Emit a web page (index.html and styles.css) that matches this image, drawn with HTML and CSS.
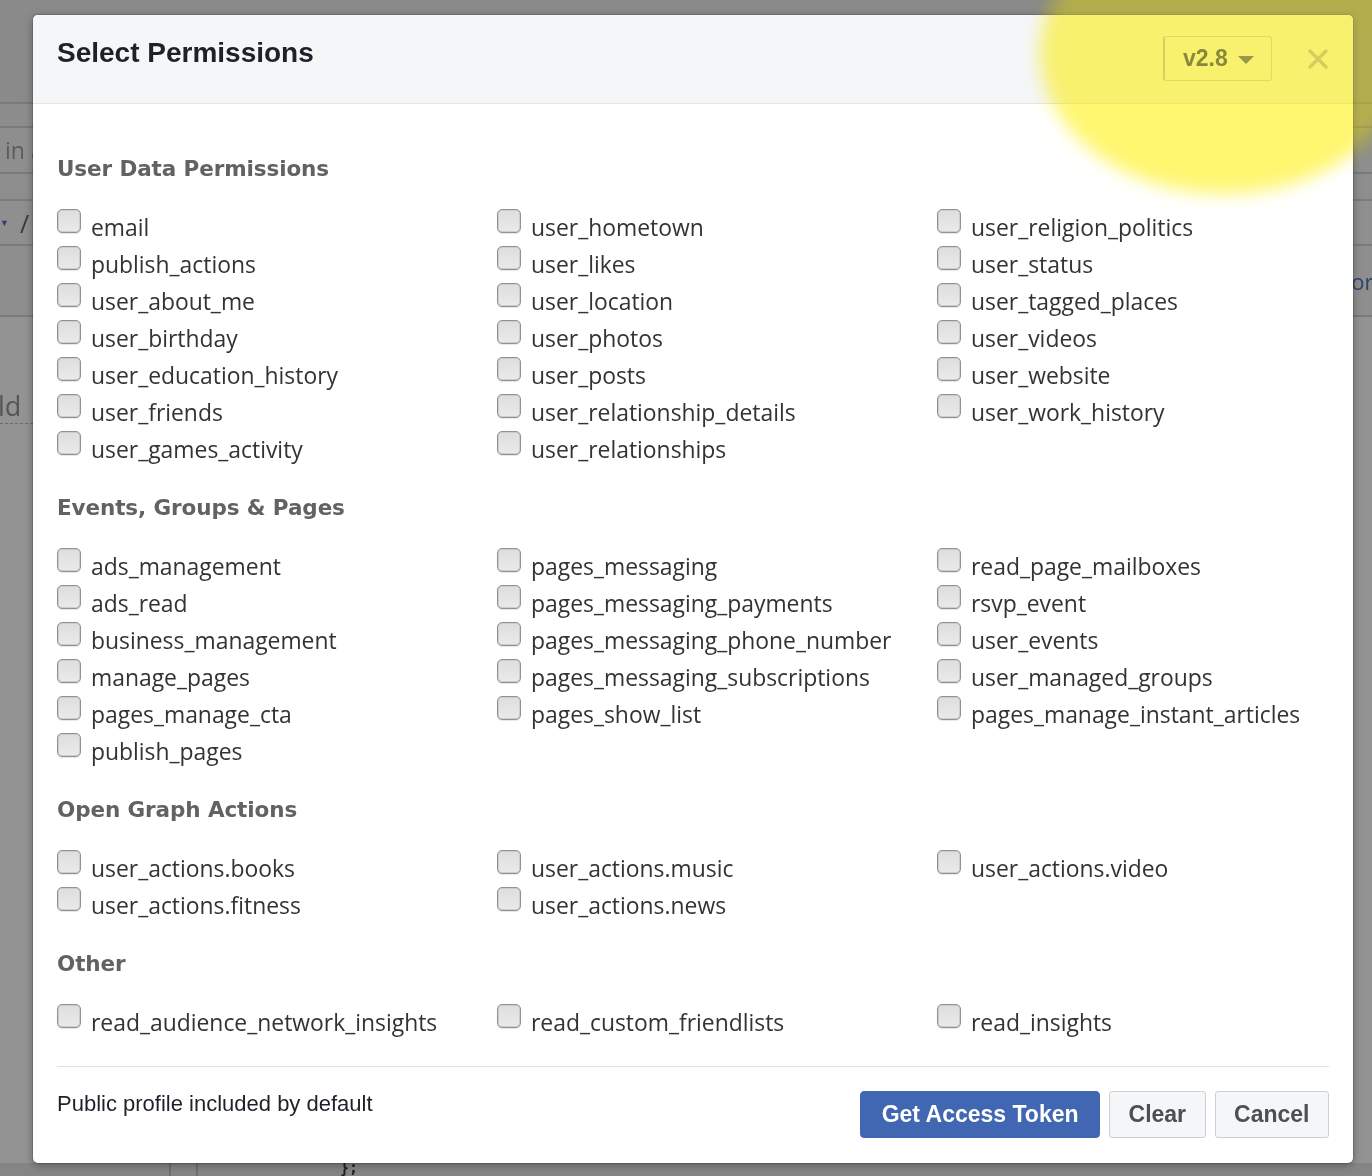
FILE: index.html
```html
<!DOCTYPE html>
<html>
<head>
<meta charset="utf-8">
<link rel="stylesheet" href="styles.css">
</head>
<body>
<div class="page">
  <div class="bg-row r1"></div>
  <div class="bg-row r2"></div>
  <div class="bg-row r3"><span class="bg-text">in a</span></div>
  <div class="bg-row r4"></div>
  <div class="bg-row r5"><span class="bg-tri">▼</span><span class="bg-text slash">/</span><span class="bg-text bg-r">r</span></div>
  <div class="bg-row r6"><span class="bg-more">more</span></div>
  <div class="bg-rest">
    <div class="bg-ld"><span class="bg-text ld">ld</span></div>
  </div>
  <div class="bg-bottom">
    <div class="bg-vcol"></div>
    <span class="bg-code">};</span>
  </div>
</div>

<div class="modal">
  <div class="modal-header">
    <div class="title">Select Permissions</div>
    <div class="header-right">
      <div class="version">v2.8<span class="caret"></span></div>
      <div class="close">
        <svg width="20" height="20" viewBox="0 0 20 20"><path d="M2 2 L18 18 M18 2 L2 18" stroke="#bcc0c4" stroke-width="3.4" stroke-linecap="round" fill="none"/></svg>
      </div>
    </div>
  </div>

  <div class="modal-body">
    <section class="group">
      <h2 class="group-title">User Data Permissions</h2>
      <div class="cols">
        <div class="col">
          <label class="item"><input type="checkbox" class="cb"><span>email</span></label>
          <label class="item"><input type="checkbox" class="cb"><span>publish_actions</span></label>
          <label class="item"><input type="checkbox" class="cb"><span>user_about_me</span></label>
          <label class="item"><input type="checkbox" class="cb"><span>user_birthday</span></label>
          <label class="item"><input type="checkbox" class="cb"><span>user_education_history</span></label>
          <label class="item"><input type="checkbox" class="cb"><span>user_friends</span></label>
          <label class="item"><input type="checkbox" class="cb"><span>user_games_activity</span></label>
        </div>
        <div class="col">
          <label class="item"><input type="checkbox" class="cb"><span>user_hometown</span></label>
          <label class="item"><input type="checkbox" class="cb"><span>user_likes</span></label>
          <label class="item"><input type="checkbox" class="cb"><span>user_location</span></label>
          <label class="item"><input type="checkbox" class="cb"><span>user_photos</span></label>
          <label class="item"><input type="checkbox" class="cb"><span>user_posts</span></label>
          <label class="item"><input type="checkbox" class="cb"><span>user_relationship_details</span></label>
          <label class="item"><input type="checkbox" class="cb"><span>user_relationships</span></label>
        </div>
        <div class="col">
          <label class="item"><input type="checkbox" class="cb"><span>user_religion_politics</span></label>
          <label class="item"><input type="checkbox" class="cb"><span>user_status</span></label>
          <label class="item"><input type="checkbox" class="cb"><span>user_tagged_places</span></label>
          <label class="item"><input type="checkbox" class="cb"><span>user_videos</span></label>
          <label class="item"><input type="checkbox" class="cb"><span>user_website</span></label>
          <label class="item"><input type="checkbox" class="cb"><span>user_work_history</span></label>
        </div>
      </div>
    </section>

    <section class="group">
      <h2 class="group-title">Events, Groups &amp; Pages</h2>
      <div class="cols">
        <div class="col">
          <label class="item"><input type="checkbox" class="cb"><span>ads_management</span></label>
          <label class="item"><input type="checkbox" class="cb"><span>ads_read</span></label>
          <label class="item"><input type="checkbox" class="cb"><span>business_management</span></label>
          <label class="item"><input type="checkbox" class="cb"><span>manage_pages</span></label>
          <label class="item"><input type="checkbox" class="cb"><span>pages_manage_cta</span></label>
          <label class="item"><input type="checkbox" class="cb"><span>publish_pages</span></label>
        </div>
        <div class="col">
          <label class="item"><input type="checkbox" class="cb"><span>pages_messaging</span></label>
          <label class="item"><input type="checkbox" class="cb"><span>pages_messaging_payments</span></label>
          <label class="item"><input type="checkbox" class="cb"><span>pages_messaging_phone_number</span></label>
          <label class="item"><input type="checkbox" class="cb"><span>pages_messaging_subscriptions</span></label>
          <label class="item"><input type="checkbox" class="cb"><span>pages_show_list</span></label>
        </div>
        <div class="col">
          <label class="item"><input type="checkbox" class="cb"><span>read_page_mailboxes</span></label>
          <label class="item"><input type="checkbox" class="cb"><span>rsvp_event</span></label>
          <label class="item"><input type="checkbox" class="cb"><span>user_events</span></label>
          <label class="item"><input type="checkbox" class="cb"><span>user_managed_groups</span></label>
          <label class="item"><input type="checkbox" class="cb"><span>pages_manage_instant_articles</span></label>
        </div>
      </div>
    </section>

    <section class="group">
      <h2 class="group-title">Open Graph Actions</h2>
      <div class="cols">
        <div class="col">
          <label class="item"><input type="checkbox" class="cb"><span>user_actions.books</span></label>
          <label class="item"><input type="checkbox" class="cb"><span>user_actions.fitness</span></label>
        </div>
        <div class="col">
          <label class="item"><input type="checkbox" class="cb"><span>user_actions.music</span></label>
          <label class="item"><input type="checkbox" class="cb"><span>user_actions.news</span></label>
        </div>
        <div class="col">
          <label class="item"><input type="checkbox" class="cb"><span>user_actions.video</span></label>
        </div>
      </div>
    </section>

    <section class="group">
      <h2 class="group-title">Other</h2>
      <div class="cols">
        <div class="col">
          <label class="item"><input type="checkbox" class="cb"><span>read_audience_network_insights</span></label>
        </div>
        <div class="col">
          <label class="item"><input type="checkbox" class="cb"><span>read_custom_friendlists</span></label>
        </div>
        <div class="col">
          <label class="item"><input type="checkbox" class="cb"><span>read_insights</span></label>
        </div>
      </div>
    </section>

    <div class="divider"></div>
  </div>

  <div class="modal-footer">
    <div class="note">Public profile included by default</div>
    <div class="buttons">
      <button class="btn primary">Get Access Token</button>
      <button class="btn">Clear</button>
      <button class="btn">Cancel</button>
    </div>
  </div>
</div>

<div class="highlight hl-multiply"></div>
<div class="highlight hl-soft"></div>
</body>
</html>
```

FILE: styles.css
```css
html, body {
  margin: 0;
  padding: 0;
}
body {
  width: 1372px;
  height: 1176px;
  overflow: hidden;
  position: relative;
  background: #8a8a8a;
  font-family: "Open Sans", "Liberation Sans", sans-serif;
}

/* ---------- dimmed page behind the dialog ---------- */
.page {
  height: 1176px;
  display: flex;
  flex-direction: column;
}
.bg-row {
  box-sizing: border-box;
  border-bottom: 2px solid #7b7b7b;
  display: flex;
  align-items: center;
  flex: none;
  white-space: nowrap;
  overflow: hidden;
}
.r1 { height: 104px; background: #8a8a8a; }
.r2 { height: 24px; background: #8d8d8d; }
.r3 { height: 46px; background: #8e8e8e; }
.r4 { height: 27px; background: #8e8e8e; }
.r5 { height: 45px; background: #8f8f8f; }
.r6 { height: 71px; background: #8e8e8e; }
.bg-text {
  font-family: "Open Sans", sans-serif;
  font-size: 23px;
  color: #5c5c5c;
  padding-left: 5px;
}
.bg-tri {
  font-size: 9px;
  color: #2c3f6b;
  padding-left: 0;
}
.slash {
  padding-left: 11px;
  font-size: 25px;
  color: #3a3a3a;
}
.bg-r {
  padding-left: 5px;
  font-size: 25px;
  color: #3a3a3a;
}
.bg-more {
  font-family: "Open Sans", sans-serif;
  font-size: 22px;
  color: #30426c;
  padding-left: 1331px;
}
.bg-rest {
  flex: 1;
  background: #939393;
}
.bg-ld {
  margin-top: 72px;
  width: 33px;
  height: 34px;
  border-bottom: 1px dashed #6a6a6a;
  display: flex;
  align-items: flex-end;
}
.ld {
  font-size: 27px;
  line-height: 34px;
  padding-left: 0;
  margin-left: -2px;
  color: #555;
}
.bg-bottom {
  height: 13px;
  flex: none;
  background: #858585;
  display: flex;
  align-items: flex-start;
}
.bg-vcol {
  margin-left: 169px;
  width: 25px;
  height: 13px;
  border-left: 2px solid #6f6f6f;
  border-right: 2px solid #6f6f6f;
}
.bg-code {
  margin-left: 142px;
  font-family: "DejaVu Sans Mono", monospace;
  font-size: 15px;
  line-height: 10px;
  font-weight: bold;
  color: #222;
}

/* ---------- dialog ---------- */
.modal {
  position: absolute;
  left: 33px;
  top: 15px;
  width: 1320px;
  height: 1148px;
  background: #fff;
  border-radius: 5px;
  box-shadow: 0 0 0 1px rgba(0, 0, 0, 0.12), 0 2px 8px rgba(0, 0, 0, 0.35);
  overflow: hidden;
  display: flex;
  flex-direction: column;
}
.modal-header {
  box-sizing: border-box;
  height: 89px;
  flex: none;
  background: #f5f6f7;
  border-bottom: 1px solid #e5e5e5;
  padding: 21px 24px 0 24px;
  display: flex;
  justify-content: space-between;
  align-items: flex-start;
}
.title {
  font-family: "Liberation Sans", Arial, sans-serif;
  font-weight: bold;
  font-size: 28px;
  line-height: 34px;
  color: #1d2129;
}
.header-right {
  display: flex;
  align-items: center;
  height: 45px;
}
.version {
  box-sizing: border-box;
  height: 45px;
  width: 109px;
  border: 1px solid #ccd0d5;
  border-left: 2px solid #bfc3c8;
  border-radius: 3px;
  background: #f5f6f7;
  padding-left: 18px;
  display: flex;
  align-items: center;
  font-family: "Liberation Sans", Arial, sans-serif;
  font-weight: bold;
  font-size: 23px;
  color: #4b4f56;
}
.caret {
  margin-left: 10px;
  width: 0;
  height: 0;
  border-left: 8px solid transparent;
  border-right: 8px solid transparent;
  border-top: 8px solid #606770;
  margin-top: 2px;
}
.close {
  margin-left: 35px;
  width: 22px;
  height: 22px;
  display: flex;
  align-items: center;
  justify-content: center;
}

.modal-body {
  flex: 1;
  padding: 50px 24px 0 24px;
}
.group {
  margin-bottom: 26px;
}
.group-title {
  margin: 0 0 24px 0;
  font-family: "DejaVu Sans", Verdana, sans-serif;
  font-weight: bold;
  font-size: 21.5px;
  line-height: 30px;
  color: #626262;
  letter-spacing: -0.1px;
}
.cols {
  display: flex;
}
.col {
  width: 440px;
  flex: none;
}
.col:last-child {
  width: auto;
  flex: 1;
}
.item {
  display: flex;
  align-items: flex-start;
  height: 37px;
  font-family: "Open Sans", sans-serif;
  font-size: 22.9px;
  line-height: 37px;
  color: #333;
  white-space: nowrap;
}
.item span {
  padding-top: 1px;
}
.cb {
  -webkit-appearance: none;
  appearance: none;
  box-sizing: border-box;
  width: 24px;
  height: 24px;
  margin: 1px 10px 0 0;
  border: 1px solid #929292;
  border-radius: 5px;
  background: linear-gradient(#dedede, #eaeaea);
  box-shadow: inset 0 0 0 1px #cdcdcd, 0 1px 1px rgba(0, 0, 0, 0.1);
  flex: none;
}
.divider {
  height: 1px;
  background: #dddfe2;
}

.modal-footer {
  flex: none;
  height: 96px;
  box-sizing: border-box;
  padding: 24px 24px 25px 24px;
  display: flex;
  justify-content: space-between;
  align-items: flex-start;
}
.note {
  font-family: "Liberation Sans", Arial, sans-serif;
  font-size: 22px;
  line-height: 26px;
  color: #1d2129;
}
.buttons {
  display: flex;
  gap: 9px;
}
.btn {
  box-sizing: border-box;
  height: 47px;
  padding: 0 18.5px;
  border: 1px solid #ccd0d5;
  border-radius: 3px;
  background: #f5f6f7;
  font-family: "Liberation Sans", Arial, sans-serif;
  font-weight: bold;
  font-size: 23px;
  color: #4b4f56;
}
.btn.primary {
  background: #4267b2;
  border-color: #4267b2;
  color: #fff;
  padding: 0 20.5px;
  border-radius: 4px;
}

/* ---------- highlighter mark (drawn over the screenshot) ---------- */
.highlight {
  position: absolute;
  left: 1042px;
  top: -88px;
  width: 364px;
  height: 280px;
  border-radius: 50%;
  filter: blur(9px);
  pointer-events: none;
}
.hl-multiply {
  background: rgb(255, 247, 112);
  mix-blend-mode: multiply;
}
.hl-soft {
  background: rgba(255, 247, 112, 0.35);
}
```
